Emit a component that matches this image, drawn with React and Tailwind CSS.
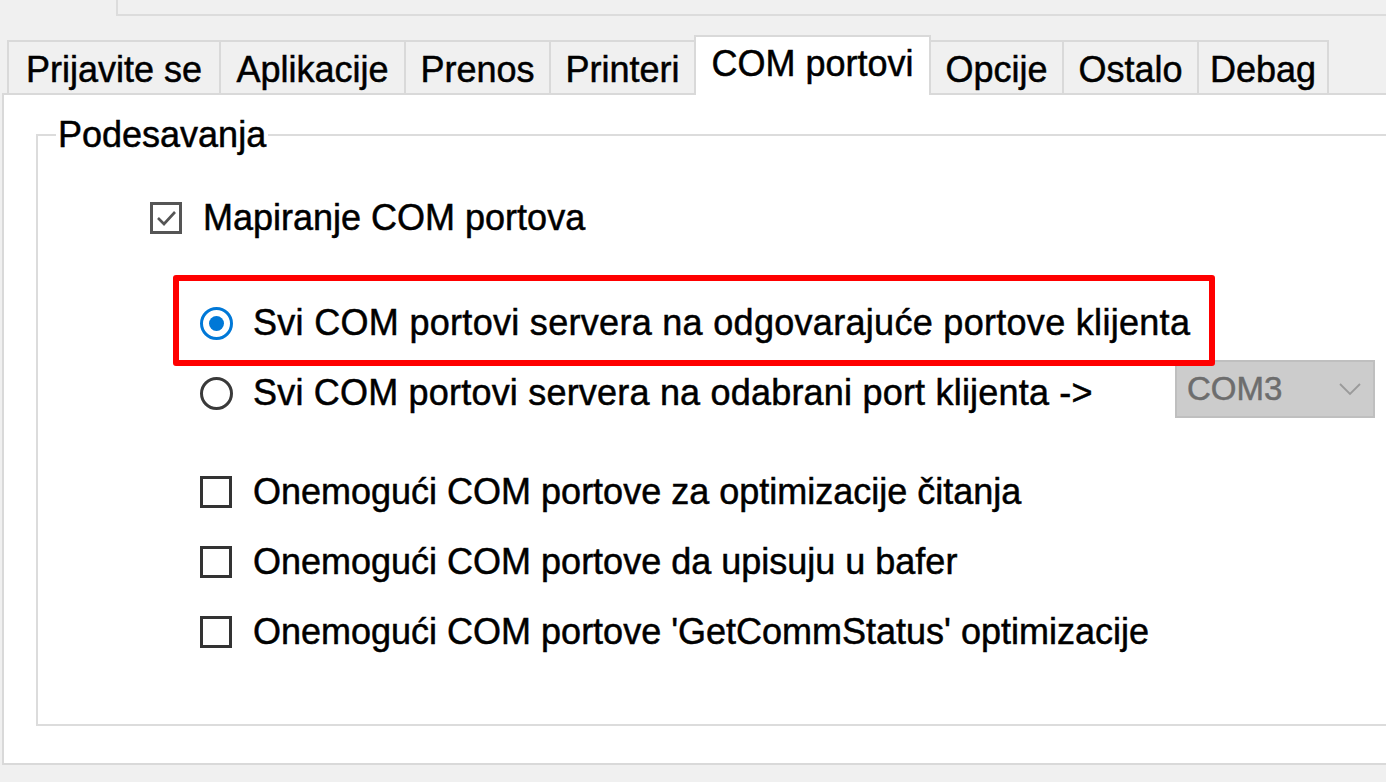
import React from "react";

const tabs = [
  { label: "Prijavite se", cls: "w-[212px] border-l-2" },
  { label: "Aplikacije", cls: "w-[185px] border-l-2" },
  { label: "Prenos", cls: "w-[145px] border-l-2" },
  { label: "Printeri", cls: "w-[145px] border-l-2" },
  { label: "COM portovi", cls: "w-[237px] border-x-2", active: true },
  { label: "Opcije", cls: "w-[131px]" },
  { label: "Ostalo", cls: "w-[135px] border-l-2" },
  { label: "Debag", cls: "w-[132px] border-x-2" },
];

function Check({ checked }) {
  return (
    <div
      className={
        "w-[32px] h-[32px] flex-none border-[3px] bg-white flex items-center justify-center " +
        (checked ? "border-[#555555]" : "border-[#333333]")
      }
    >
      {checked && (
        <svg width="22" height="18" viewBox="0 0 22 18">
          <polyline points="3,9 9,15 20,3" fill="none" stroke="#555555" strokeWidth="2.6" />
        </svg>
      )}
    </div>
  );
}

function Radio({ on }) {
  return on ? (
    <div className="w-[33px] h-[33px] flex-none rounded-full border-[3px] border-[#0078d7] bg-white flex items-center justify-center">
      <div className="w-[15px] h-[15px] rounded-full bg-[#0078d7]" />
    </div>
  ) : (
    <div className="w-[33px] h-[33px] flex-none rounded-full border-[3px] border-[#3a3a3a] bg-white" />
  );
}

export default function App() {
  return (
    <div className="w-[1386px] h-[782px] overflow-hidden bg-[#f0f0f0] text-black text-[36px] leading-[40px] [-webkit-text-stroke:0.5px] font-['Liberation_Sans',Arial,sans-serif]">
      <div className="h-[16px] ml-[116px] border-l-2 border-b-2 border-[#dcdcdc]" />

      <div className="mt-[19px] h-[58px] pl-[7px] flex items-end">
        {tabs.map((t) =>
          t.active ? (
            <div
              key={t.label}
              className={t.cls + " relative z-10 -mb-[2px] h-[60px] pt-[7px] bg-white border-t-2 border-[#d9d9d9] text-center whitespace-nowrap"}
            >
              {t.label}
            </div>
          ) : (
            <div
              key={t.label}
              className={t.cls + " h-[53px] pt-[8px] bg-[#f0f0f0] border-t-2 border-[#d9d9d9] text-center whitespace-nowrap"}
            >
              {t.label}
            </div>
          )
        )}
      </div>

      <div className="ml-[2px] h-[672px] bg-white border-t-2 border-l-2 border-b-2 border-[#d9d9d9] overflow-hidden">
        <fieldset className="mt-[20px] ml-[32px] w-[1400px] h-[611px] border-2 border-[#dcdcdc] p-0">
          <legend className="ml-[18px] px-[2px] leading-[40px]">Podesavanja</legend>

          <div className="mt-[43px] h-[40px] pl-[112px] flex items-center gap-[21px]">
            <Check checked />
            <span className="whitespace-nowrap">Mapiranje COM portova</span>
          </div>

          <div className="relative mt-[65px] h-[40px] pl-[162px] flex items-center gap-[20px]">
            <Radio on />
            <span className="whitespace-nowrap tracking-[0.3px]">Svi COM portovi servera na odgovarajuće portove klijenta</span>
            <div className="absolute left-[135px] -top-[28px] w-[1042px] h-[91px] border-[6px] border-[#ff0000] rounded-[3px] pointer-events-none" />
          </div>

          <div className="mt-[30px] h-[40px] pl-[162px] flex items-center gap-[20px]">
            <Radio />
            <span className="w-[902px] flex-none whitespace-nowrap tracking-[0.2px]">Svi COM portovi servera na odabrani port klijenta -&gt;</span>
            <div className="mb-[8px] w-[200px] h-[58px] flex-none bg-[#cccccc] border-2 border-[#bfbfbf] pl-[10px] pr-[12px] flex items-center justify-between text-[#6d6d6d] text-[33px]">
              <span>COM3</span>
              <svg width="22" height="13" viewBox="0 0 22 13">
                <polyline points="1,1 11,11 21,1" fill="none" stroke="#9a9a9a" strokeWidth="1.8" />
              </svg>
            </div>
          </div>

          <div className="mt-[59px] h-[40px] pl-[162px] flex items-center gap-[21px]">
            <Check />
            <span className="whitespace-nowrap">Onemogući COM portove za optimizacije čitanja</span>
          </div>

          <div className="mt-[30px] h-[40px] pl-[162px] flex items-center gap-[21px]">
            <Check />
            <span className="whitespace-nowrap">Onemogući COM portove da upisuju u bafer</span>
          </div>

          <div className="mt-[30px] h-[40px] pl-[162px] flex items-center gap-[21px]">
            <Check />
            <span className="whitespace-nowrap">Onemogući COM portove 'GetCommStatus' optimizacije</span>
          </div>
        </fieldset>
      </div>
    </div>
  );
}
